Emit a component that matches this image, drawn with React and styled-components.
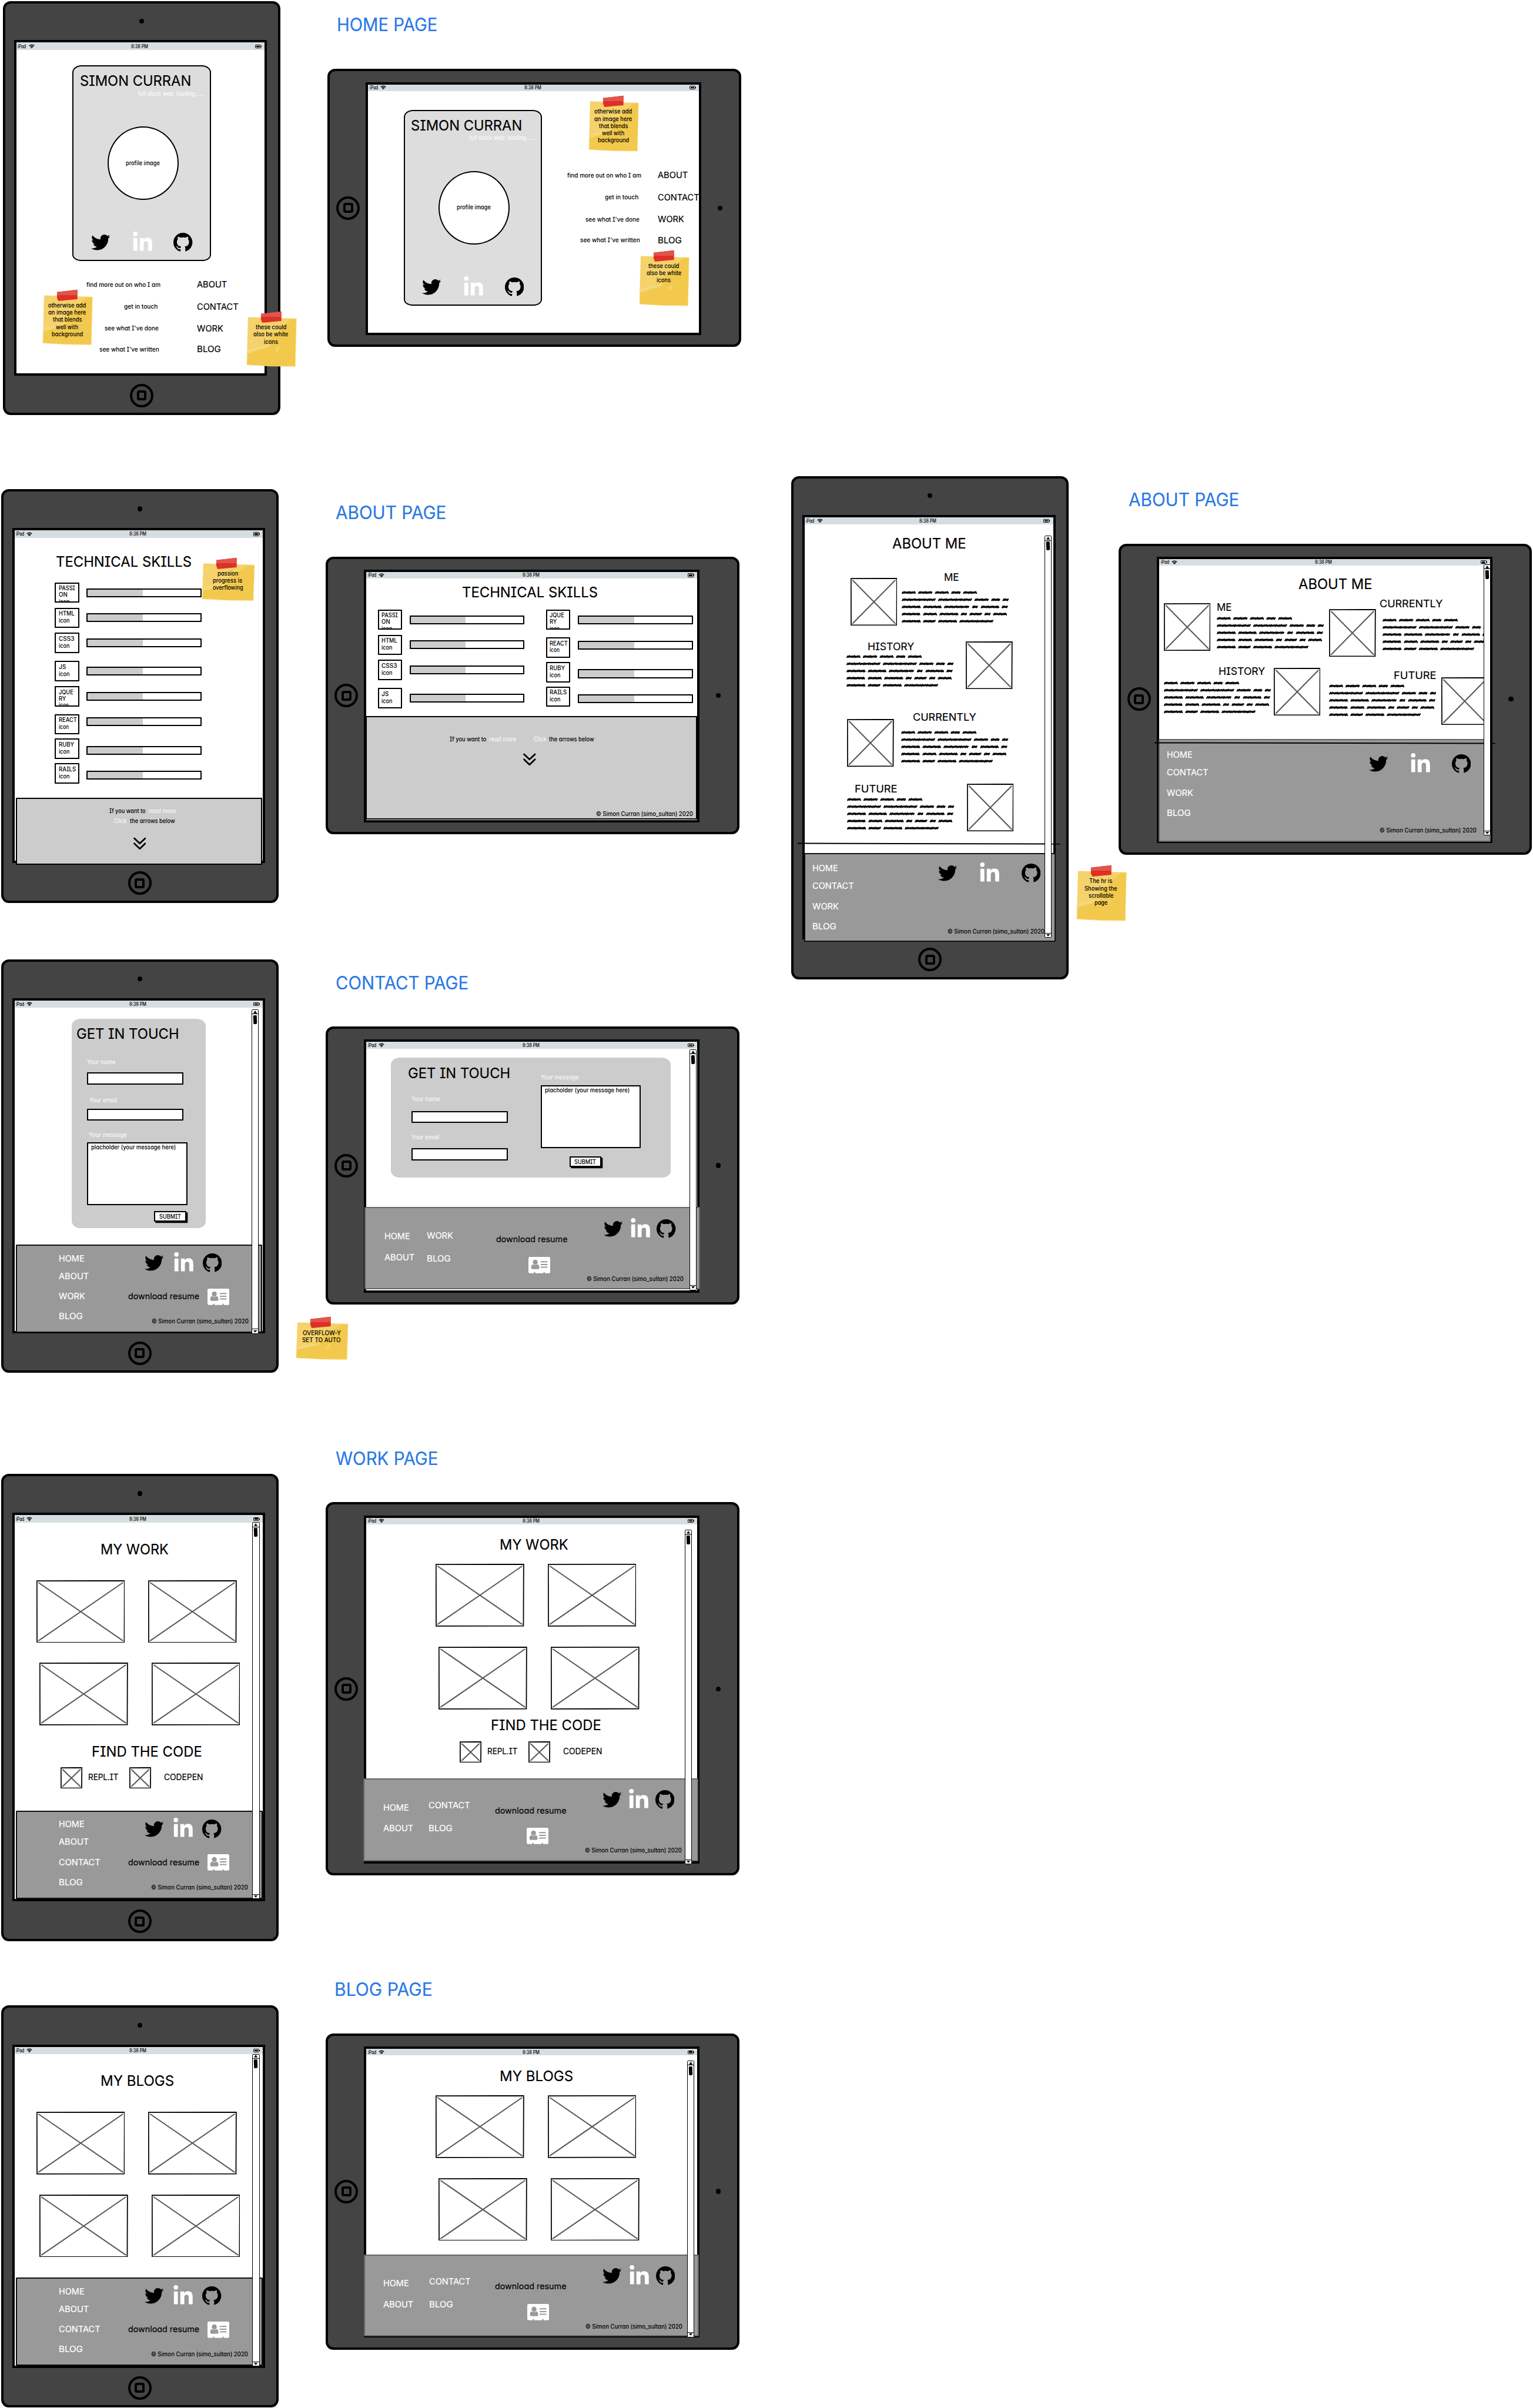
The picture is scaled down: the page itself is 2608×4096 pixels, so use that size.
import React from "react";
import styled, { createGlobalStyle, css } from "styled-components";
import { FaTwitter, FaLinkedinIn } from "react-icons/fa";

/* ---------- foundations ---------- */

const FONT = `Inter, "Open Sans", "Liberation Sans", sans-serif`;
const FEATURES = `"cv08", "cv11"`;
const INK = "#000";
const BLUE = "#2a78e4";

const GlobalStyle = createGlobalStyle`
  *, *::before, *::after { box-sizing: border-box; }
  html, body { margin: 0; background: #fff; }
  body { font-family: ${FONT}; font-feature-settings: ${FEATURES}; color: ${INK}; overflow: hidden; }
  svg { display: block; flex: none; }
`;

const widths = new Map();
function naturalWidth(text, weight) {
  const key = `${weight}|${text}`;
  if (!widths.has(key)) {
    const probe = document.createElement("span");
    probe.style.cssText = `position:absolute;visibility:hidden;white-space:pre;font:${weight} 100px ${FONT};font-feature-settings:${FEATURES}`;
    probe.textContent = text;
    document.body.appendChild(probe);
    widths.set(key, probe.getBoundingClientRect().width / 100);
    probe.remove();
  }
  return widths.get(key);
}

const TextLine = styled.span`
  display: block;
  flex: none;
  width: ${(p) => p.$w}px;
  height: ${(p) => (p.$size < 14 ? "13px" : "1em")};
  margin: ${(p) => p.$m || 0};
  font-size: ${(p) => p.$size}px;
  font-weight: ${(p) => p.$weight};
  line-height: ${(p) => (p.$size < 14 ? "13px" : 1)};
  color: ${(p) => p.$color || "inherit"};
  -webkit-text-stroke: ${(p) => (p.$size > 15 ? 0.25 : 0)}px currentColor;
  white-space: pre;
  transform-origin: 0 50%;
`;

function Text({ w, size = 13.5, color, m, children }) {
  const light = size > 15 || color;
  const weight = light ? 400 : 500;
  const scale = w / (naturalWidth(children, weight) * size);
  return (
    <TextLine $w={w} $size={size} $weight={weight} $color={color} $m={m} style={{ transform: `scaleX(${scale})` }}>
      {children}
    </TextLine>
  );
}

/* ---------- board ---------- */

const Board = styled.main`
  position: relative;
  width: 3376px;
  height: 5302px;
  zoom: 0.7725;
  background: #fff;
  overflow: hidden;
`;

const Pin = styled.div`
  position: absolute;
  left: ${(p) => p.$x}px;
  top: ${(p) => p.$y}px;
`;

function PageTitle({ x, y, w, children }) {
  return (
    <Pin $x={x - 2} $y={y - 19}>
      <Text w={w} size={39.5} color={BLUE}>
        {children}
      </Text>
    </Pin>
  );
}

/* ---------- tablet ---------- */

const TabletBody = styled.section`
  position: absolute;
  left: ${(p) => p.$x}px;
  top: ${(p) => p.$y}px;
  display: grid;
  border: 5.2px solid ${INK};
  border-radius: 17px;
  background: #444;
  ${(p) =>
    p.$landscape
      ? css`
          width: 911px;
          height: ${p.$size}px;
          grid-template-columns: 79.5px minmax(0, 1fr) 82px;
        `
      : css`
          width: 612px;
          height: ${p.$size}px;
          grid-template-rows: 80.5px minmax(0, 1fr) 82px;
        `}
`;

const Edge = styled.div`
  display: flex;
  align-items: center;
  justify-content: center;
  padding: ${(p) => p.$pad || 0};
`;

const Camera = styled.i`
  width: 11px;
  height: 11px;
  border-radius: 50%;
  background: ${INK};
`;

const HomeRing = styled.div`
  display: flex;
  align-items: center;
  justify-content: center;
  width: 52px;
  height: 52px;
  border: 5.2px solid ${INK};
  border-radius: 50%;
`;

const HomeSquare = styled.i`
  width: 22px;
  height: 22px;
  border: 5.2px solid ${INK};
  border-radius: 5px;
`;

const Screen = styled.div`
  position: relative;
  display: flex;
  flex-direction: column;
  min-width: 0;
  min-height: 0;
  margin: ${(p) => (p.$landscape ? "23.5px 0 21px" : "0 24.5px 0 19.5px")};
  border: 5.2px solid ${INK};
  background: #fff;
`;

const StatusBar = styled.header`
  flex: none;
  display: grid;
  grid-template-columns: 1fr auto 1fr;
  align-items: center;
  height: ${(p) => (p.$landscape ? 14.5 : 16.5)}px;
  padding: 0 8px 0 3.5px;
  background: #d6dee2;
`;

const Carrier = styled.div`
  display: flex;
  align-items: center;
  gap: 5px;
`;

const Battery = styled.div`
  justify-self: end;
  position: relative;
  width: 13px;
  height: 8px;
  padding: 1px 2px 1px 1px;
  border: 1.3px solid ${INK};
  border-radius: 1.5px;
  &::before {
    content: "";
    display: block;
    height: 100%;
    background: ${INK};
  }
  &::after {
    content: "";
    position: absolute;
    right: -2.6px;
    top: 1.3px;
    width: 1.3px;
    height: 2.6px;
    background: ${INK};
  }
`;

const Wifi = () => (
  <svg width="13" height="10" viewBox="0 0 26 20" fill="none" stroke="#000" strokeWidth="3.2">
    <path d="M1.5 7.5C8 1 18 1 24.500 7.500M5.500 11.500c4-4 11-4 15 0M9.300 15c2-2 5.400-2 7.400 0" />
    <path d="M10.500 16.500h5L13 20z" fill="#000" stroke="none" />
  </svg>
);

function Tablet({ x, y, size, landscape, children }) {
  const home = (
    <Edge $pad={landscape ? "0 0 0 1.5px" : "6px 0 0"}>
      <HomeRing>
        <HomeSquare />
      </HomeRing>
    </Edge>
  );
  const camera = (
    <Edge $pad={landscape ? "0" : "0 0 4px"}>
      <Camera />
    </Edge>
  );
  return (
    <TabletBody $x={x} $y={y} $size={size} $landscape={landscape}>
      {landscape ? home : camera}
      <Screen $landscape={landscape}>
        <StatusBar $landscape={landscape}>
          <Carrier>
            <Text w={18.500} size={11}>iPad</Text>
            <Wifi />
          </Carrier>
          <Text w={37.500} size={11}>8:38 PM</Text>
          <Battery />
        </StatusBar>
        {children}
      </Screen>
      {landscape ? camera : home}
    </TabletBody>
  );
}

const Content = styled.div`
  flex: none;
  display: flex;
  flex-direction: ${(p) => (p.$row ? "row" : "column")};
  align-items: flex-start;
  height: ${(p) => p.$h}px;
  overflow: hidden;
`;

/* ---------- scrollbar, rule, sticky note ---------- */

const ScrollTrack = styled.div`
  position: absolute;
  left: ${(p) => p.$x}px;
  top: ${(p) => p.$y}px;
  display: flex;
  flex-direction: column;
  width: 16px;
  height: ${(p) => p.$h}px;
  border: 2px solid ${INK};
  border-radius: 2px;
  background: #fff;
`;

const ScrollButton = styled.div`
  display: flex;
  align-items: center;
  justify-content: center;
  height: 9.5px;
  border: solid ${INK};
  border-width: ${(p) => (p.$end ? "1.5px 0 0" : "0 0 1.5px")};
`;

const Thumb = styled.i`
  width: 8px;
  height: 20px;
  margin: 2px auto auto;
  border-radius: 2px 1px 3px 2px;
  background: ${INK};
  transform: skewX(2deg);
`;

function Scrollbar({ x, y, h }) {
  return (
    <ScrollTrack $x={x} $y={y} $h={h}>
      <ScrollButton>
        <svg width="8" height="6" viewBox="0 0 8 6"><path d="M4 0l4 6H0z" /></svg>
      </ScrollButton>
      <Thumb />
      <ScrollButton $end>
        <svg width="8" height="5" viewBox="0 0 8 5"><path d="M0 0h8L4 5z" /></svg>
      </ScrollButton>
    </ScrollTrack>
  );
}

const FoldLine = styled.hr`
  position: absolute;
  left: ${(p) => p.$x}px;
  top: ${(p) => p.$y}px;
  width: ${(p) => p.$w}px;
  height: 2px;
  margin: 0;
  border: 0;
  background: ${INK};
  transform: rotate(0.12deg);
`;

const NoteBody = styled.aside`
  position: absolute;
  z-index: 1;
  left: ${(p) => p.$x}px;
  top: ${(p) => p.$y}px;
  display: flex;
  flex-direction: column;
  align-items: center;
  gap: 2.7px;
  width: ${(p) => p.$w}px;
  height: ${(p) => p.$h}px;
  padding: 16px 2px 0 0;
`;

const Paper = styled.svg`
  position: absolute;
  left: 0;
  top: -14px;
  z-index: -1;
  overflow: visible;
`;

function Note({ x, y, w, h, lines }) {
  return (
    <NoteBody $x={x - 1} $y={y} $w={w} $h={h}>
      <Paper width={w} height={h + 14} viewBox={`0 -14 ${w} ${h + 14}`}>
        <path d={`M3 0L${w} 3L${w - 2.5} ${h}L${w / 2} ${h - 0.500}L0 ${h - 3.500}z`} fill="#f2c94c" stroke="#f8dc85" strokeWidth="1" />
        <path d={`M3.500 1L${w * 0.900} 3L${w * 0.750} ${h * 0.160}L${w * 0.620} ${h * 0.300}L${w * 0.450} ${h * 0.450}L${w * 0.300} ${h * 0.620}L1 ${h * 0.700}z`} fill="#f5d573" opacity=".8" />
        <path d={`M1 ${h * 0.660}L${w * 0.480} ${h * 0.540}L${w * 0.450} ${h * 0.600}L1 ${h * 0.740}z`} fill="#f6da83" opacity=".8" />
        <path d={`M${w * 0.580} ${h * 0.620}l12 -5l-4 8l-7 7z`} fill="#f6d774" opacity=".7" />
        <path d="M31 -8L76 -13V8L34 12L31 5z" fill="#de3026" />
        <path d="M31 -8L76 -13V-1H31z" fill="#e0544b" />
      </Paper>
      {lines.map(([text, width]) => (
        <Text key={text} w={width}>{text}</Text>
      ))}
    </NoteBody>
  );
}

/* ---------- shared pieces ---------- */

const ICON = 42;

const Social = styled.div`
  display: flex;
  align-items: center;
  gap: ${(p) => p.$gap}px;
  height: ${ICON}px;
  margin: ${(p) => p.$m || 0};
  & > :nth-child(2) {
    margin: 0 -4px 0 -2px;
    color: #fff;
  }
`;

function SocialIcons({ gap, m }) {
  return (
    <Social $gap={gap} $m={m}>
      <FaTwitter size={ICON} />
      <FaLinkedinIn size={48} />
      <svg width={ICON} height={ICON} viewBox="0 0 16 16">
        <path d="M8 0C3.58 0 0 3.58 0 8c0 3.54 2.29 6.53 5.47 7.59.4.07.55-.17.55-.38 0-.19-.01-.82-.01-1.49-2.01.37-2.53-.49-2.69-.94-.09-.23-.48-.94-.82-1.13-.28-.15-.68-.52-.01-.53.63-.01 1.08.58 1.23.82.72 1.21 1.87.87 2.33.66.07-.52.28-.87.51-1.07-1.78-.2-3.64-.89-3.64-3.95 0-.87.31-1.59.82-2.15-.08-.2-.36-1.02.08-2.12 0 0 .67-.21 2.2.82.64-.18 1.32-.27 2-.27.68 0 1.36.09 2 .27 1.53-1.04 2.2-.82 2.2-.82.44 1.1.16 1.92.08 2.12.51.56.82 1.27.82 2.15 0 3.07-1.87 3.75-3.65 3.95.29.25.54.73.54 1.48 0 1.07-.01 1.93-.01 2.2 0 .21.15.46.55.38A8.013 8.013 0 0 0 16 8c0-4.42-3.58-8-8-8z" />
      </svg>
    </Social>
  );
}

const PictureFrame = styled.svg`
  margin: ${(p) => p.$m || 0};
`;

function Picture({ w, h, m }) {
  return (
    <PictureFrame $m={m} width={w} height={h} viewBox={`0 0 ${w} ${h}`}>
      <path d={`M5 5.500L${w - 5} ${h - 5}M${w - 5} 5.500L5 ${h - 5}`} stroke="#595959" strokeWidth="2.700" strokeLinecap="round" />
      <path d={`M1 1.500L${w - 1} 1L${w - 1.500} ${h - 1.200}L1.300 ${h - 1}z`} fill="none" stroke="#000" strokeWidth="2.300" />
    </PictureFrame>
  );
}

const Copyright = ({ m }) => (
  <Text w={214} m={m}>© Simon Curran (simo_sultan) 2020</Text>
);

const VCard = styled.svg`
  margin: ${(p) => p.$m || 0};
`;

const ResumeCard = ({ m }) => (
  <VCard $m={m} width="48" height="36" viewBox="0 0 48 36">
    <path d="M3 0h42a3 3 0 0 1 3 3v30a3 3 0 0 1-3 3h-9v-2.500h-3V36H15v-2.500h-3V36H3a3 3 0 0 1-3-3V3a3 3 0 0 1 3-3z" fill="#fff" />
    <g fill="#999">
      <circle cx="15" cy="11.500" r="5.500" />
      <path d="M6 23c0-4 2-6.500 4.500-6.500 2.500 1.800 6.500 1.800 9 0C22 16.500 24 19 24 23c0 2.500-1 4-3 4H9c-2 0-3-1.500-3-4z" />
      <path d="M27 9.500h15v2.500H27zM27 15.500h15V18H27zM27 21.500h15V24H27z" />
    </g>
  </VCard>
);

const LINK_WIDTHS = { HOME: 56.5, ABOUT: 66.5, CONTACT: 91.5, WORK: 58, BLOG: 53 };

const PageLink = ({ name, color, m }) => (
  <Text w={LINK_WIDTHS[name]} size={19} color={color} m={m}>{name}</Text>
);

/* ---------- footers ---------- */

const FooterBar = styled.footer`
  flex: none;
  display: flex;
  align-items: flex-start;
  width: ${(p) => p.$w}px;
  height: ${(p) => p.$h}px;
  margin-left: ${(p) => p.$x}px;
  border: 2.6px solid ${(p) => (p.$soft ? "#666" : "#111")};
  border-radius: 2px;
  background: #999;
`;

const FooterColumn = styled.div`
  flex: none;
  display: flex;
  flex-direction: column;
  align-items: flex-start;
  width: ${(p) => (p.$w ? `${p.$w}px` : "auto")};
  padding: ${(p) => p.$pad || 0};
`;

const ResumeRow = styled.div`
  display: flex;
  align-items: center;
  gap: 18px;
  margin: ${(p) => p.$m || 0};
`;

const LINK_SPACING = ["0", "20px 0 0", "26px 0 0", "25px 0 0"];

function LinkStack({ w, pad, names }) {
  return (
    <FooterColumn $w={w} $pad={pad}>
      {names.map((name, i) => (
        <PageLink key={name} name={name} color="#fff" m={LINK_SPACING[i]} />
      ))}
    </FooterColumn>
  );
}

function TallFooter({ x, names, h = 194, w = 544 }) {
  return (
    <FooterBar $x={x} $w={w} $h={h}>
      <LinkStack w={244} pad="18.500px 0 0 92px" names={names} />
      <FooterColumn>
        <SocialIcons gap={22} m="16.500px 0 0 37px" />
        <ResumeRow $m="35.500px 0 0 1px">
          <Text w={157} size={19}>download resume</Text>
          <ResumeCard />
        </ResumeRow>
        <Copyright m="30.500px 0 0 52px" />
      </FooterColumn>
    </FooterBar>
  );
}

function WideFooter({ x, third, fourth = "BLOG", h = 181, w = 738.5 }) {
  const second = third === "WORK" ? { pad: "51.500px 0 0", gap: "32px 0 0", first: 93.5 } : { pad: "48.500px 0 0", gap: "32px 0 0", first: 100 };
  return (
    <FooterBar $soft $x={x} $w={w} $h={h}>
      <FooterColumn $w={41 + second.first} $pad="53px 0 0 41px">
        <PageLink name="HOME" color="#fff" />
        <PageLink name="ABOUT" color="#fff" m="27px 0 0" />
      </FooterColumn>
      <FooterColumn $w={245 - second.first} $pad={second.pad}>
        <PageLink name={third} color="#fff" />
        <PageLink name={fourth} color="#fff" m={second.gap} />
      </FooterColumn>
      <FooterColumn $w={199} $pad="59.500px 0 0 1px">
        <Text w={157.5} size={19}>download resume</Text>
        <ResumeCard m="28.500px 0 0 71px" />
      </FooterColumn>
      <FooterColumn>
        <SocialIcons gap={16.5} m="24.500px 0 0 39px" />
        <Copyright m="84px 0 0 1px" />
      </FooterColumn>
    </FooterBar>
  );
}

/* ---------- home page ---------- */

const ProfileCard = styled.article`
  flex: none;
  display: flex;
  flex-direction: column;
  align-items: flex-start;
  width: 305px;
  height: 431px;
  margin: ${(p) => p.$m};
  border: 2.6px solid ${INK};
  border-radius: 20px 20px 18px 19px / 16px 16px 14px 14px;
  background: #ddd;
`;

const Avatar = styled.div`
  display: flex;
  align-items: center;
  justify-content: center;
  width: 156px;
  height: 162px;
  margin: 65px 0 0 74.500px;
  border: 2.7px solid ${INK};
  border-radius: 50%;
  background: #fff;
`;

const Profile = ({ m }) => (
  <ProfileCard $m={m}>
    <Text w={245} size={32} m="15.500px 0 0 13.500px">SIMON CURRAN</Text>
    <Text w={146} color="#fff" m="6px 0 0 141.500px">full stack web: loading......</Text>
    <Avatar>
      <Text w={75}>profile image</Text>
    </Avatar>
    <SocialIcons gap={49} m="72.500px 0 0 38px" />
  </ProfileCard>
);

const Menu = styled.nav`
  flex: none;
  display: flex;
  flex-direction: column;
  gap: 28.5px;
  margin-top: ${(p) => p.$top}px;
`;

const MenuRow = styled.div`
  display: flex;
  align-items: center;
  height: 20px;
  &:last-child {
    margin-top: -3px;
  }
`;

const MenuLead = styled.div`
  flex: none;
  display: flex;
  justify-content: flex-end;
  width: ${(p) => p.$w}px;
  padding-right: ${(p) => p.$gap}px;
`;

const MENU = [
  ["find more out on who I am", 163.5, 0, "ABOUT"],
  ["get in touch", 74.500, 5.5, "CONTACT"],
  ["see what I've done", 119, 3.5, "WORK"],
  ["see what I've written", 132, 2.5, "BLOG"],
];

const HomeMenu = ({ top, lead, gap }) => (
  <Menu $top={top}>
    {MENU.map(([text, w, inset, name]) => (
      <MenuRow key={name}>
        <MenuLead $w={lead} $gap={gap + inset}>
          <Text w={w}>{text}</Text>
        </MenuLead>
        <PageLink name={name} />
      </MenuRow>
    ))}
  </Menu>
);

/* ---------- technical skills ---------- */

const SkillColumn = styled.div`
  display: flex;
  flex-direction: column;
`;

const SkillColumns = styled.div`
  display: flex;
  gap: 47px;
  margin: 22px 0 0 25px;
`;

const SkillRow = styled.div`
  display: flex;
  align-items: flex-start;
  margin-top: ${(p) => p.$top}px;
  &:first-child {
    margin-top: 0;
  }
`;

const SkillIcon = styled.div`
  display: flex;
  flex-direction: column;
  gap: ${(p) => (p.$tight ? 1.6 : 2.8)}px;
  width: 53.5px;
  height: 45px;
  padding: 6px 0 0 8px;
  overflow: hidden;
  box-shadow: inset 0 0 0 2.6px ${INK};
  border-radius: 1px;
`;

const Meter = styled.div`
  width: 253.5px;
  height: 19.5px;
  margin: ${(p) => p.$top}px 0 0 16.5px;
  border: 2.7px solid ${INK};
  border-radius: 1px;
  background: linear-gradient(to right, #ccc 48.7%, #fff 48.7%);
`;

const SKILLS = [
  { lines: [["PASSI", 36], ["ON", 19], ["icon", 24]], top: 0, bar: 13.5, tight: true },
  { lines: [["HTML", 34.5], ["icon", 24]], top: 10.8, bar: 12.5 },
  { lines: [["CSS3", 34.5], ["icon", 24]], top: 10.3, bar: 13 },
  { lines: [["JS", 16], ["icon", 24]], top: 17, bar: 13 },
  { lines: [["JQUE", 32], ["RY", 16], ["icon", 22]], top: 10.3, bar: 13, tight: true },
  { lines: [["REACT", 40], ["icon", 22]], top: 16.8, bar: 7.500, tight: true },
  { lines: [["RUBY", 34], ["icon", 24]], top: 9.2, bar: 16 },
  { lines: [["RAILS", 38], ["icon", 24]], top: 8.8, bar: 17 },
];

const Skills = ({ items }) => (
  <SkillColumn>
    {items.map((s) => (
      <SkillRow key={s.lines[0][0]} $top={s.top}>
        <SkillIcon $tight={s.tight}>
          {s.lines.map(([text, w]) => (
            <Text key={text} w={w} size={13.2}>{text}</Text>
          ))}
        </SkillIcon>
        <Meter $top={s.bar} />
      </SkillRow>
    ))}
  </SkillColumn>
);

const SkillIndent = styled.div`
  margin: 29px 0 0 89px;
`;

const ReadMore = styled.div`
  flex: none;
  display: flex;
  flex-direction: column;
  align-items: flex-start;
  width: ${(p) => p.$w}px;
  height: ${(p) => p.$h}px;
  margin-left: ${(p) => p.$x}px;
  border: 2.6px solid ${INK};
  background: #ccc;
`;

const Sentence = styled.div`
  display: flex;
  gap: ${(p) => p.$gap}px;
  margin: ${(p) => p.$m};
`;

const ChevronMark = styled.svg`
  margin: ${(p) => p.$m};
`;

const Chevrons = ({ m }) => (
  <ChevronMark $m={m} width="28" height="28" viewBox="0 0 28 28" fill="none" stroke="#000" strokeWidth="3.600" strokeLinecap="round" strokeLinejoin="round">
    <path d="M2 2.500L14 14L26 2.500M2 14L14 25.500L26 14" />
  </ChevronMark>
);

/* ---------- about me ---------- */

const SCRIBBLE = [
  [[0, 31], [36, 68], [73, 104], [109, 130], [135, 166]],
  [[0, 75], [80, 155], [160, 192], [197, 217], [222, 236]],
  [[0, 42], [47, 88], [93, 149], [155, 168], [174, 215], [220, 234]],
  [[0, 41], [47, 78], [83, 125], [130, 144], [149, 177], [182, 196], [201, 232]],
  [[0, 42], [47, 75], [80, 122], [127, 202]],
];

function scribbleWord([from, to], y) {
  const steps = Math.max(5, Math.round((to - from) / 1.9));
  let d = `M${from + 1.5} ${y + 1.6}`;
  for (let i = 1; i <= steps; i += 1) {
    const x = from + 1.5 + ((to - from - 3) * i) / steps;
    const lift = i % 2 ? -1.7 + (i % 3) * 0.4 : 1.8 - (i % 5) * 0.2;
    d += `L${x.toFixed(1)} ${(y + lift).toFixed(1)}`;
  }
  return d;
}

const ScribbleMark = styled.svg`
  margin: ${(p) => p.$m};
`;

const Scribble = ({ m }) => (
  <ScribbleMark $m={m} width="236" height="74" viewBox="0 0 236 74" fill="none" stroke="#000" strokeWidth="2.900" strokeLinecap="round" strokeLinejoin="round">
    {SCRIBBLE.map((words, row) => (
      <path key={row} d={words.map((word) => scribbleWord(word, 5 + row * 15.8)).join("")} />
    ))}
  </ScribbleMark>
);

const BioRow = styled.div`
  display: flex;
  align-items: flex-start;
  margin: ${(p) => p.$m};
`;

const BioCopy = styled.div`
  flex: none;
`;

function Bio({ title, w, m, flip, picture, titleIndent, scribble }) {
  const image = <Picture w={103} h={105} m={picture} />;
  const copy = (
    <BioCopy>
      <Text w={w} size={22.5} m={`0 0 0 ${titleIndent}px`}>{title}</Text>
      <Scribble m={scribble} />
    </BioCopy>
  );
  return (
    <BioRow $m={m}>
      {flip ? copy : image}
      {flip ? image : copy}
    </BioRow>
  );
}

const BioColumns = styled.div`
  display: flex;
  align-items: flex-start;
  margin: 16px 0 0 10px;
`;

const BioColumn = styled.div`
  flex: none;
  width: 364px;
`;

/* ---------- contact ---------- */

const FormCard = styled.form`
  flex: none;
  display: flex;
  flex-direction: ${(p) => (p.$wide ? "row" : "column")};
  align-items: flex-start;
  width: ${(p) => (p.$wide ? 617 : 295)}px;
  height: ${(p) => (p.$wide ? 264 : 461)}px;
  margin: ${(p) => p.$m};
  border-radius: 19px 20px 18px 19px / 16px 16px 15px 16px;
  background: #ccc;
`;

const FormColumn = styled.div`
  flex: none;
  display: flex;
  flex-direction: column;
  align-items: flex-start;
  width: ${(p) => p.$w}px;
`;

const Field = styled.div`
  flex: none;
  width: ${(p) => (p.$area ? 220.5 : 212)}px;
  height: ${(p) => (p.$area ? 139.5 : 26.5)}px;
  padding: 3.500px 0 0 6px;
  margin: ${(p) => p.$m};
  border: 2.7px solid ${INK};
  border-radius: 1px;
  background: #fff;
`;

const SubmitButton = styled.div`
  flex: none;
  display: flex;
  align-items: center;
  justify-content: center;
  width: 71px;
  height: 24px;
  margin: ${(p) => p.$m};
  border: 2.6px solid ${INK};
  border-radius: 1px;
  background: #fff;
  box-shadow: 3px 3px 0 ${INK};
`;

const Submit = ({ m }) => (
  <SubmitButton $m={m}>
    <Text w={48} size={13.2}>SUBMIT</Text>
  </SubmitButton>
);

const MessageBox = ({ m }) => (
  <Field $area $m={m}>
    <Text w={187}>placholder (your message here)</Text>
  </Field>
);

/* ---------- galleries ---------- */

const GalleryRow = styled.div`
  display: flex;
  gap: 52px;
  margin: ${(p) => p.$m};
`;

const Gallery = ({ top, left }) => (
  <>
    <GalleryRow $m={`${top}px 0 0 ${left}px`}>
      <Picture w={195} h={138} />
      <Picture w={195} h={138} />
    </GalleryRow>
    <GalleryRow $m={`44px 0 0 ${left + 7}px`}>
      <Picture w={195} h={138} />
      <Picture w={195} h={138} />
    </GalleryRow>
  </>
);

const CodeLinks = styled.div`
  display: flex;
  align-items: center;
  margin: ${(p) => p.$m};
`;

const FindTheCode = ({ top, left, rowLeft }) => (
  <>
    <Text w={243} size={32} m={`${top}px 0 0 ${left}px`}>FIND THE CODE</Text>
    <CodeLinks $m={`19px 0 0 ${rowLeft}px`}>
      <Picture w={48} h={47} />
      <Text w={66.5} size={18} m="0 0 0 12px">REPL.IT</Text>
      <Picture w={48} h={47} m="0 0 0 24.5px" />
      <Text w={86} size={18} m="0 0 0 28px">CODEPEN</Text>
    </CodeLinks>
  </>
);

const IMAGE_NOTE = [["otherwise add", 83.5], ["an image here", 83.5], ["that blends", 64], ["well with", 49.500], ["background", 69]];
const ICON_NOTE = [["these could", 68], ["also be white", 77], ["icons", 31]];

/* ---------- board contents ---------- */

export default function App() {
  return (
    <>
      <GlobalStyle />
      <Board>
        <PageTitle x={744} y={54.5} w={222}>HOME PAGE</PageTitle>
        <PageTitle x={741} y={1129} w={244}>ABOUT PAGE</PageTitle>
        <PageTitle x={2487} y={1100} w={244}>ABOUT PAGE</PageTitle>
        <PageTitle x={741} y={2164} w={293}>CONTACT PAGE</PageTitle>
        <PageTitle x={741} y={3211} w={226}>WORK PAGE</PageTitle>
        <PageTitle x={739} y={4380.5} w={216}>BLOG PAGE</PageTitle>

        <Tablet x={6} y={3} size={911}>
          <Content $h={712}>
            <Profile m="34px 0 0 124px" />
            <HomeMenu top={42} lead={398} gap={80.5} />
          </Content>
        </Tablet>

        <Tablet landscape x={721} y={152} size={612}>
          <Content $row $h={533}>
            <Profile m="42px 0 0 78px" />
            <HomeMenu top={176.5} lead={255} gap={36.5} />
          </Content>
        </Tablet>

        <Tablet x={2} y={1077} size={911}>
          <Content $h={572.6}>
            <Text w={299} size={32} m="37px 0 0 91px">TECHNICAL SKILLS</Text>
            <SkillIndent>
              <Skills items={SKILLS} />
            </SkillIndent>
          </Content>
          <ReadMore $x={3} $w={543} $h={147.5}>
            <Sentence $gap={6} $m="21px 0 0 203.5px">
              <Text w={80}>If you want to</Text>
              <Text w={60} color="#fff">read more</Text>
            </Sentence>
            <Sentence $gap={7} $m="8px 0 0 213.5px">
              <Text w={28} color="#fff">Click</Text>
              <Text w={99.5}>the arrows below</Text>
            </Sentence>
            <Chevrons m="28.5px 0 0 256px" />
          </ReadMore>
        </Tablet>

        <Tablet landscape x={717} y={1225.5} size={612}>
          <Content $h={303}>
            <Text w={299} size={32} m="14px 0 0 210px">TECHNICAL SKILLS</Text>
            <SkillColumns>
              <Skills items={SKILLS.slice(0, 4)} />
              <Skills items={SKILLS.slice(4)} />
            </SkillColumns>
          </Content>
          <ReadMore $x={-1.5} $w={730} $h={228}>
            <Sentence $gap={5.5} $m="42px 0 0 183px">
              <Text w={81}>If you want to</Text>
              <Text w={60} color="#fff" m="0 33px 0 0">read more</Text>
              <Text w={28} color="#fff">Click</Text>
              <Text w={99.5}>the arrows below</Text>
            </Sentence>
            <Chevrons m="24px 0 0 344.5px" />
            <Copyright m="99.5px 0 0 505px" />
          </ReadMore>
        </Tablet>

        <Tablet x={1742} y={1048} size={1108}>
          <Content $h={723}>
            <Text w={162.5} size={32} m="25px 0 0 193px">ABOUT ME</Text>
            <Bio title="ME" w={33} m="47.5px 0 0 101px" picture="13px 9.5px 0 0" titleIndent={94} scribble="17px 0 0" />
            <Bio flip title="HISTORY" w={102.5} m="34px 0 0 92.5px" picture="0 0 0 26.5px" titleIndent={46} scribble="7px 0 0" />
            <Bio title="CURRENTLY" w={139.5} m="51px 0 0 94px" picture="16px 16px 0 0" titleIndent={25} scribble="17px 0 0" />
            <Bio flip title="FUTURE" w={94} m="37px 0 0 94px" picture="0 0 0 27.5px" titleIndent={16} scribble="6.5px 0 0" />
          </Content>
          <FooterBar $x={-1.5} $w={554} $h={196}>
            <LinkStack w={293.5} pad="22px 0 0 16.500px" names={["HOME", "CONTACT", "WORK", "BLOG"]} />
            <FooterColumn>
              <SocialIcons gap={49.5} m="21px 0 0" />
              <Copyright m="102px 0 0 20px" />
            </FooterColumn>
          </FooterBar>
          <FoldLine $x={-15} $y={718} $w={579} />
          <Scrollbar x={528} y={41} h={885} />
        </Tablet>

        <Tablet landscape x={2463} y={1197} size={685}>
          <Content $h={382}>
            <Text w={162.5} size={32} m="24px 0 0 307px">ABOUT ME</Text>
            <BioColumns>
              <BioColumn>
                <Bio title="ME" w={33} m="8px 0 0" picture="3px 14px 0 0" titleIndent={0} scribble="8.5px 0 0" />
                <Bio flip title="HISTORY" w={102.5} m="33px 0 0" picture="4px 0 0 6px" titleIndent={121} scribble="10px 0 0" />
              </BioColumn>
              <BioColumn>
                <Bio title="CURRENTLY" w={139} m="0" picture="24px 8px 0 0" titleIndent={0} scribble="20.5px 0 0 7px" />
                <Bio flip title="FUTURE" w={94} m="29px 0 0" picture="16px 0 0 11px" titleIndent={142} scribble="8px 0 0" />
              </BioColumn>
            </BioColumns>
          </Content>
          <FooterBar $soft $x={-2} $w={732} $h={226}>
            <LinkStack w={461} pad="23.500px 0 0 15.500px" names={["HOME", "CONTACT", "WORK", "BLOG"]} />
            <FooterColumn>
              <SocialIcons gap={49.5} m="31px 0 0" />
              <Copyright m="119.500px 0 0 24px" />
            </FooterColumn>
          </FooterBar>
          <FoldLine $x={-11} $y={404} $w={751} />
          <Scrollbar x={714} y={12} h={597} />
        </Tablet>

        <Tablet x={2} y={2112} size={911}>
          <Content $h={521.5}>
            <FormCard $m="24px 0 0 126.5px">
              <Text w={226} size={32} m="17.5px 0 0 10.5px">GET IN TOUCH</Text>
              <Text w={63} color="#fff" m="40px 0 0 33.5px">Your name</Text>
              <Field $m="15.5px 0 0 33.5px" />
              <Text w={61} color="#fff" m="28.5px 0 0 38px">Your email</Text>
              <Field $m="12px 0 0 33.5px" />
              <Text w={84} color="#fff" m="25px 0 0 36.5px">Your message</Text>
              <MessageBox m="9px 0 0 33.5px" />
              <Submit m="12px 0 0 180.5px" />
            </FormCard>
          </Content>
          <TallFooter x={3} w={543} names={["HOME", "ABOUT", "WORK", "BLOG"]} />
          <Scrollbar x={522} y={20} h={714} />
        </Tablet>

        <Tablet landscape x={717} y={2260.5} size={612}>
          <Content $h={349}>
            <FormCard $wide $m="20px 0 0 53.5px">
              <FormColumn $w={330.5}>
                <Text w={225.5} size={32} m="18px 0 0 38.5px">GET IN TOUCH</Text>
                <Text w={63} color="#fff" m="36px 0 0 45.5px">Your name</Text>
                <Field $m="18.5px 0 0 45.5px" />
                <Text w={61} color="#fff" m="25px 0 0 46px">Your email</Text>
                <Field $m="18px 0 0 45.5px" />
              </FormColumn>
              <FormColumn $w={260}>
                <Text w={84} color="#fff" m="37.5px 0 0">Your message</Text>
                <MessageBox m="10px 0 0" />
                <Submit m="17px 0 0 63px" />
              </FormColumn>
            </FormCard>
          </Content>
          <WideFooter x={-4} third="WORK" />
          <Scrollbar x={711} y={16.5} h={530} />
        </Tablet>

        <Tablet x={2} y={3245.5} size={1028.5}>
          <Content $h={634}>
            <Text w={150} size={32} m="42.5px 0 0 189px">MY WORK</Text>
            <Gallery top={52} left={48} />
            <FindTheCode top={41} left={170} rowLeft={102} />
          </Content>
          <TallFooter x={2.5} h={195} names={["HOME", "ABOUT", "CONTACT", "BLOG"]} />
          <Scrollbar x={524} y={15.5} h={830} />
        </Tablet>

        <Tablet landscape x={717} y={3308} size={822}>
          <Content $h={559}>
            <Text w={151} size={32} m="29px 0 0 293px">MY WORK</Text>
            <Gallery top={26.5} left={152.5} />
            <FindTheCode top={19} left={274} rowLeft={206} />
          </Content>
          <WideFooter x={-7} third="CONTACT" h={183} />
          <Scrollbar x={701} y={27} h={736} />
        </Tablet>

        <Tablet x={2} y={4416} size={885}>
          <Content $h={492}>
            <Text w={162} size={32} m="42px 0 0 190px">MY BLOGS</Text>
            <Gallery top={52.5} left={48} />
          </Content>
          <TallFooter x={2.5} names={["HOME", "ABOUT", "CONTACT", "BLOG"]} />
          <Scrollbar x={524} y={15.5} h={688} />
        </Tablet>

        <Tablet landscape x={717} y={4477.5} size={696}>
          <Content $h={438}>
            <Text w={162} size={32} m="29.5px 0 0 294px">MY BLOGS</Text>
            <Gallery top={26.5} left={152.5} />
          </Content>
          <WideFooter x={-6} third="CONTACT" />
          <Scrollbar x={706} y={26} h={609} />
        </Tablet>

        <Note x={95.5} y={651} w={109} h={108} lines={IMAGE_NOTE} />
        <Note x={544.5} y={699} w={109} h={108} lines={ICON_NOTE} />
        <Note x={1298} y={224} w={109} h={109} lines={IMAGE_NOTE} />
        <Note x={1409.5} y={564} w={109} h={109} lines={ICON_NOTE} />
        <Note x={446} y={1241} w={115} h={81} lines={[["passion", 46], ["progress is", 65], ["overflowing", 67]]} />
        <Note x={2372} y={1918.5} w={109} h={109} lines={[["The hr is", 51], ["Showing the", 72], ["scrollable", 55], ["page", 29]]} />
        <Note x={653.5} y={2913} w={114} h={81} lines={[["OVERFLOW-Y", 84.5], ["SET TO AUTO", 85]]} />
      </Board>
    </>
  );
}
